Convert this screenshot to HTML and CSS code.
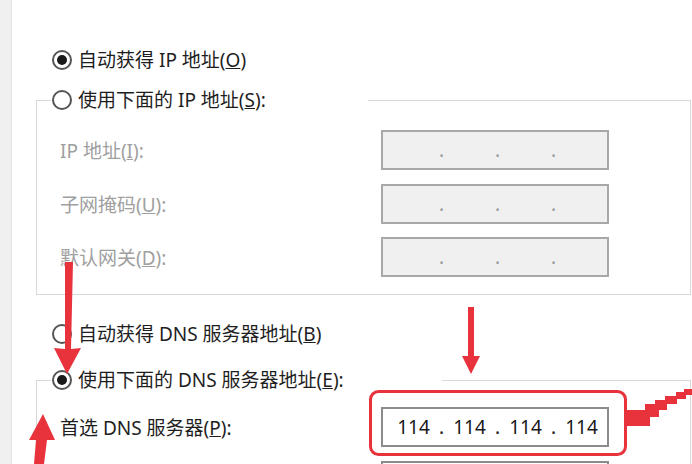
FILE: index.html
```html
<!DOCTYPE html>
<html lang="zh-CN">
<head>
    <meta charset="UTF-8">
    <title>Internet 协议版本 4 (TCP/IPv4) 属性</title>
    <link rel="stylesheet" href="styles.css">
</head>
<body>
    <div class="window">
        <div class="side"></div>

        <div class="panel">
            <div class="radio">
                <span class="dot on"></span><span>自动获得 IP 地址(<u>O</u>)</span>
            </div>

            <fieldset class="group">
                <legend class="radio legend-ip"><span class="dot"></span><span>使用下面的 IP 地址(<u>S</u>):</span></legend>
                <div class="rows rows-ip">
                    <div class="row disabled">
                        <span class="label">IP 地址(<u>I</u>):</span>
                        <div class="ip">
                            <span class="seg"></span><span class="sep">.</span><span class="seg"></span><span class="sep">.</span><span class="seg"></span><span class="sep">.</span><span class="seg"></span>
                        </div>
                    </div>
                    <div class="row disabled">
                        <span class="label">子网掩码(<u>U</u>):</span>
                        <div class="ip">
                            <span class="seg"></span><span class="sep">.</span><span class="seg"></span><span class="sep">.</span><span class="seg"></span><span class="sep">.</span><span class="seg"></span>
                        </div>
                    </div>
                    <div class="row disabled">
                        <span class="label">默认网关(<u>D</u>):</span>
                        <div class="ip">
                            <span class="seg"></span><span class="sep">.</span><span class="seg"></span><span class="sep">.</span><span class="seg"></span><span class="sep">.</span><span class="seg"></span>
                        </div>
                    </div>
                </div>
            </fieldset>

            <div class="radio radio-dns">
                <span class="dot"></span><span>自动获得 DNS 服务器地址(<u>B</u>)</span>
            </div>

            <fieldset class="group group-dns">
                <legend class="radio legend-dns"><span class="dot on"></span><span>使用下面的 DNS 服务器地址(<u>E</u>):</span></legend>
                <div class="rows rows-dns">
                    <div class="row">
                        <span class="label">首选 DNS 服务器(<u>P</u>):</span>
                        <div class="ip active">
                            <span class="seg">114</span><span class="sep">.</span><span class="seg">114</span><span class="sep">.</span><span class="seg">114</span><span class="sep">.</span><span class="seg">114</span>
                        </div>
                    </div>
                    <!-- second server row, only its top edge shows in the window -->
                    <div class="row">
                        <span class="label"></span>
                        <div class="ip active"></div>
                    </div>
                </div>
            </fieldset>
        </div>

        <!-- red annotation marks drawn over the dialog -->
        <svg class="marks" width="692" height="464" viewBox="0 0 692 464">
            <g fill="#e8333d">
                <polygon points="65,262 73,262 71,349 81,348 67,374 54,348 65,349"/>
                <polygon points="468,307 474,307 474,356 480,356 471,374 462,356 468,356"/>
                <polygon points="43,414 55,440 47,440 44,464 34,464 36,440 29,440"/>
                <rect x="626" y="410" width="24" height="16"/>
                <rect x="645" y="404" width="14" height="13"/>
                <rect x="655" y="400" width="12" height="10"/>
                <rect x="665" y="396" width="12" height="8"/>
                <rect x="676" y="392" width="10" height="7"/>
                <rect x="684" y="389" width="8" height="6"/>
            </g>
            <rect x="370.5" y="391.5" width="255" height="63" rx="8" fill="none" stroke="#e8333d" stroke-width="3"/>
        </svg>
    </div>
</body>
</html>
```

FILE: styles.css
```css
body {
    margin: 0;
    background: #fff;
    font-family: "Noto Sans", "Noto Sans CJK SC", sans-serif;
    font-size: 19px;
    color: #1e1e1e;
    overflow: hidden;
}

.window {
    position: relative;
    display: flex;
    width: 692px;
    height: 464px;
    overflow: hidden;
}

.side {
    width: 11px;
    flex: none;
    background: #f0f0f0;
    border-right: 1px solid #e2e2e2;
}

.panel {
    flex: 1;
    padding: 50px 1px 0 24px;
}

/* Radio buttons */
.radio {
    display: flex;
    align-items: center;
    gap: 6px;
    height: 20px;
    line-height: 20px;
    margin-left: 16px;
    white-space: nowrap;
}

.dot {
    width: 20px;
    height: 20px;
    flex: none;
    box-sizing: border-box;
    border: 2px solid #555;
    border-radius: 50%;
    display: flex;
    align-items: center;
    justify-content: center;
    background: #fff;
}

.dot.on::after {
    content: "";
    width: 10px;
    height: 10px;
    border-radius: 50%;
    background: #1a1a1a;
}

.radio-dns {
    margin-top: 29px;
}

/* Group boxes */
.group {
    margin: 20px 0 0 0;
    padding: 0;
    border: 1px solid #d8d8d8;
    min-width: 0;
}

.group-dns {
    margin-top: 26px;
}

.group legend {
    box-sizing: border-box;
    margin-left: 14px;
    padding: 0 0 0 1px;
}

.legend-ip {
    width: 317px;
}

.legend-dns {
    width: 391px;
}

.rows {
    display: flex;
    flex-direction: column;
    gap: 13.5px;
    padding: 20px 0 17px 23px;
}

.rows-dns {
    padding-top: 17px;
}

.row {
    display: flex;
    align-items: center;
    height: 40px;
}

.label {
    width: 321px;
    flex: none;
    white-space: nowrap;
}

.row.disabled .label {
    color: #a0a0a0;
}

/* IP address boxes */
.ip {
    width: 228px;
    height: 40px;
    box-sizing: border-box;
    border: 2px solid #8c8c8c;
    background: #fff;
    display: flex;
    align-items: center;
    padding-left: 8px;
    line-height: 36px;
    color: #1a1a1a;
}

.row.disabled .ip {
    background: #f0f0f0;
    border-color: #a8a8a8;
    color: #9a9a9a;
}

.seg {
    width: 45px;
    text-align: center;
}

.sep {
    width: 11px;
    text-align: center;
}

.marks {
    position: absolute;
    top: 0;
    left: 0;
    pointer-events: none;
}
```
